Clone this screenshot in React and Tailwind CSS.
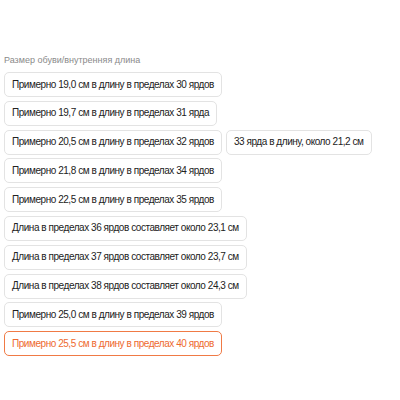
import React from "react";

const rows = [
  ["Примерно 19,0 см в длину в пределах 30 ярдов"],
  ["Примерно 19,7 см в длину в пределах 31 ярда"],
  ["Примерно 20,5 см в длину в пределах 32 ярдов", "33 ярда в длину, около 21,2 см"],
  ["Примерно 21,8 см в длину в пределах 34 ярдов"],
  ["Примерно 22,5 см в длину в пределах 35 ярдов"],
  ["Длина в пределах 36 ярдов составляет около 23,1 см"],
  ["Длина в пределах 37 ярдов составляет около 23,7 см"],
  ["Длина в пределах 38 ярдов составляет около 24,3 см"],
  ["Примерно 25,0 см в длину в пределах 39 ярдов"],
];

const Option = ({ label, active }) => (
  <button
    className={`h-[25px] px-[7px] rounded-[5px] border text-[10px] tracking-[-0.45px] leading-none whitespace-nowrap bg-white ${
      active ? "border-[#f07a45] text-[#ee6a2f]" : "border-[#e3e3e3] text-[#222]"
    }`}
  >
    {label}
  </button>
);

export default function App() {
  return (
    <div className="w-[400px] h-[400px] bg-white pt-[54px] pl-[4px]" style={{ fontFamily: '"Liberation Sans", Arial, sans-serif' }}>
      <div className="text-[9px] text-[#8a8a8a] leading-[13px] mb-[5px]">Размер обуви/внутренняя длина</div>
      <div className="flex flex-col gap-[3.8px]">
        {rows.map((r, i) => (
          <div key={i} className="flex gap-[4px]">
            {r.map((l) => (
              <Option key={l} label={l} />
            ))}
          </div>
        ))}
        <div className="flex">
          <Option label="Примерно 25,5 см в длину в пределах 40 ярдов" active />
        </div>
      </div>
    </div>
  );
}
